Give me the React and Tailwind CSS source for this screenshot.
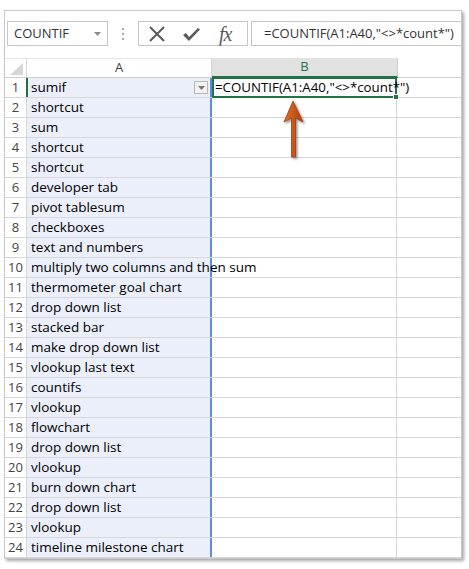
import React from "react";

const items = [
  "sumif",
  "shortcut",
  "sum",
  "shortcut",
  "shortcut",
  "developer tab",
  "pivot tablesum",
  "checkboxes",
  "text and numbers",
  "multiply two columns and then sum",
  "thermometer goal chart",
  "drop down list",
  "stacked bar",
  "make drop down list",
  "vlookup last text",
  "countifs",
  "vlookup",
  "flowchart",
  "drop down list",
  "vlookup",
  "burn down chart",
  "drop down list",
  "vlookup",
  "timeline milestone chart",
];

const uiFont = "font-['Open_Sans','Noto_Sans',sans-serif]";

function Row({ n, text }) {
  const first = n === 1;
  return (
    <div className="flex h-[20px] border-b border-[#d6d6d6]">
      <div className="w-[22px] shrink-0 flex items-center justify-center text-[13px] text-[#444] bg-white border-r border-[#d6d6d6]">
        {n}
      </div>
      <div className="w-[185px] shrink-0 relative flex items-center pl-[4px] bg-[#eaeff9] border-r-2 border-[#5c8fda] text-[13.5px] text-black whitespace-nowrap">
        {first && (
          <div className="absolute left-[-1px] top-0 bottom-0 w-[2px] bg-[#217346]" />
        )}
        {text}
        {first && (
          <div className="absolute right-[2px] top-[3px] w-[14px] h-[13px] border border-[#b8b8b8] bg-[#f2f2f2] flex items-center justify-center">
            <svg width="7" height="4" viewBox="0 0 7 4">
              <path d="M0 0 L7 0 L3.5 4 Z" fill="#777" />
            </svg>
          </div>
        )}
      </div>
      <div className="w-[185px] shrink-0 relative border-r border-[#d6d6d6]">
        {first && (
          <div className="absolute left-0 top-[-1px] w-[185px] h-[21px] border-2 border-[#217346] flex items-center pl-[1px] text-[13.3px] text-black whitespace-nowrap z-10">
            <span className="relative">=COUNTIF(A1:A40,"&lt;&gt;*count*")</span>
            <div className="absolute right-[-4px] bottom-[-4px] w-[6px] h-[6px] bg-[#217346] border border-white" />
          </div>
        )}
      </div>
      <div className="flex-1" />
    </div>
  );
}

export default function App() {
  return (
    <div className={`w-[469px] h-[569px] bg-white relative overflow-hidden ${uiFont}`}>
      <div className="absolute left-[4px] top-[10px] w-[458px] border border-[#c9c9c9] bg-white shadow-[2px_2px_3px_rgba(0,0,0,0.35)]">
        {/* toolbar */}
        <div className="h-[47px] flex items-start pt-[10px] text-[13px] text-[#333]">
          <div className="ml-[2px] w-[101px] h-[25px] border border-[#c6c6c6] flex items-center justify-between pl-[6px] pr-[6px]">
            <span>COUNTIF</span>
            <svg width="7" height="4" viewBox="0 0 7 4">
              <path d="M0 0 L7 0 L3.5 4 Z" fill="#8a8a8a" />
            </svg>
          </div>
          <div className="ml-[14px] mt-[7px] flex flex-col gap-[3px]">
            <div className="w-[2px] h-[2px] bg-[#a8a8a8]" />
            <div className="w-[2px] h-[2px] bg-[#a8a8a8]" />
            <div className="w-[2px] h-[2px] bg-[#a8a8a8]" />
          </div>
          <div className="ml-[14px] w-[110px] h-[25px] border border-[#c6c6c6] flex items-center pl-[9px] gap-[16px]">
            <svg width="18" height="16" viewBox="0 0 18 16">
              <path d="M2 1 L16 15 M16 1 L2 15" stroke="#5a5a5a" strokeWidth="2" fill="none" />
            </svg>
            <svg width="19" height="16" viewBox="0 0 19 16">
              <path d="M1 9 L4 7 L7 11 L16 2 L18 3.5 L7 15 Z" fill="#5a5a5a" />
            </svg>
            <span className="font-['Liberation_Serif',serif] italic text-[20px] text-[#5a5a5a] leading-none ml-[2px] tracking-[-1px]">fx</span>
          </div>
          <div className="ml-[3px] flex-1 h-[25px] border border-[#c6c6c6] border-r-0 flex items-center pl-[12px] whitespace-nowrap">
            =COUNTIF(A1:A40,"&lt;&gt;*count*")
          </div>
        </div>

        {/* header */}
        <div className="flex h-[20px] border-b border-[#d0d0d0] text-[13px]">
          <div className="w-[22px] shrink-0 relative bg-white border-r border-[#d6d6d6] border-t border-t-[#e4e4e4]">
            <svg className="absolute left-[5px] top-[4px]" width="13" height="12" viewBox="0 0 13 12">
              <path d="M13 0 L13 12 L0 12 Z" fill="#d6d6d6" />
            </svg>
          </div>
          <div className="w-[185px] shrink-0 flex items-center justify-center bg-white text-[#444] border-r border-[#d6d6d6] border-t border-t-[#e4e4e4]">
            A
          </div>
          <div className="w-[186px] shrink-0 flex items-center justify-center bg-[#e1e1e1] text-[#217346] border-r border-[#d0d0d0] border-b-2 border-b-[#217346] mb-[-1px]">
            B
          </div>
          <div className="flex-1 bg-white" />
        </div>

        {items.map((t, i) => (
          <Row key={i} n={i + 1} text={t} />
        ))}
      </div>

      {/* arrow */}
      <svg className="absolute left-[280px] top-[98px]" width="28" height="66" viewBox="0 0 28 66">
        <defs>
          <linearGradient id="ag" x1="0" x2="1" y1="0" y2="0">
            <stop offset="0" stopColor="#e0712a" />
            <stop offset="0.5" stopColor="#c9561a" />
            <stop offset="1" stopColor="#a9440f" />
          </linearGradient>
          <filter id="sh" x="-50%" y="-20%" width="200%" height="150%">
            <feDropShadow dx="1.5" dy="1.5" stdDeviation="1.2" floodColor="#000" floodOpacity="0.45" />
          </filter>
        </defs>
        <path
          d="M13 3 L23 24 L15.5 20 L15.5 59 L11.5 59 L11.5 20 L4 24 Z"
          fill="url(#ag)"
          stroke="#9c3f0e"
          strokeWidth="0.8"
          filter="url(#sh)"
        />
      </svg>
    </div>
  );
}
